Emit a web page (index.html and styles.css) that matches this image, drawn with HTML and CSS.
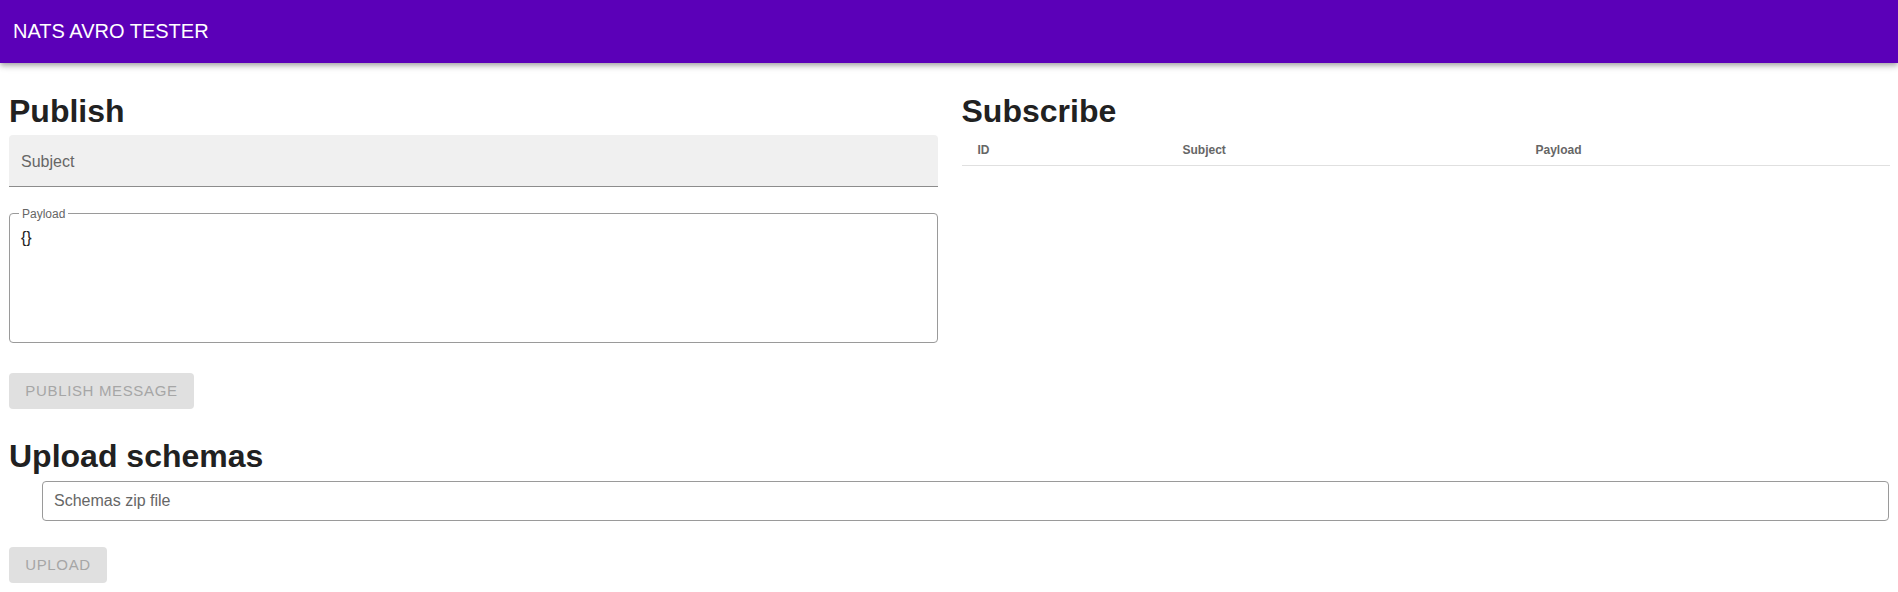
FILE: index.html
```html
<!DOCTYPE html>
<html lang="en">
<head>
<meta charset="utf-8">
<title>NATS AVRO TESTER</title>
<link rel="stylesheet" href="styles.css">
</head>
<body>
<header class="app-bar">
  <div class="app-title">NATS AVRO TESTER</div>
</header>
<main class="main">
  <div class="columns">
    <section class="col">
      <h1 class="heading">Publish</h1>
      <div class="filled-field">
        <input class="filled-input" type="text" placeholder="Subject">
      </div>
      <fieldset class="outlined-area">
        <legend class="area-legend">Payload</legend>
        <textarea class="area-input">{}</textarea>
      </fieldset>
      <button class="btn btn-publish" type="button" disabled>Publish message</button>
    </section>
    <section class="col">
      <h1 class="heading">Subscribe</h1>
      <table class="msg-table">
        <colgroup>
          <col class="c-id">
          <col class="c-subject">
          <col>
        </colgroup>
        <thead>
          <tr>
            <th>ID</th>
            <th>Subject</th>
            <th>Payload</th>
          </tr>
        </thead>
        <tbody></tbody>
      </table>
    </section>
  </div>
  <section class="upload">
    <h1 class="heading heading-upload">Upload schemas</h1>
    <div class="file-field">
      <input class="file-input" type="text" placeholder="Schemas zip file" readonly>
    </div>
    <button class="btn btn-upload" type="button" disabled>Upload</button>
  </section>
</main>
</body>
</html>
```

FILE: styles.css
```css
* { box-sizing: border-box; }

html, body {
  margin: 0;
  padding: 0;
  background: #ffffff;
  font-family: "Liberation Sans", Arial, Helvetica, sans-serif;
  color: #212121;
}

.app-bar {
  height: 63px;
  background: #5b00b8;
  display: flex;
  align-items: center;
  padding-left: 13px;
  box-shadow: 0 2px 4px -1px rgba(0,0,0,0.2), 0 4px 5px 0 rgba(0,0,0,0.14), 0 1px 10px 0 rgba(0,0,0,0.12);
  position: relative;
  z-index: 1;
}

.app-title {
  color: #ffffff;
  font-size: 20px;
  line-height: 24px;
  margin-top: -1px;
}

.main {
  padding: 8px 8px 0 9px;
}

.columns {
  display: grid;
  grid-template-columns: 1fr 1fr;
  column-gap: 24px;
}

.col {
  display: flex;
  flex-direction: column;
  align-items: stretch;
  min-width: 0;
}

.heading {
  font-size: 32px;
  font-weight: bold;
  line-height: 37px;
  margin: 21.5px 0 5px;
  color: #212121;
}

.filled-field {
  background: #f0f0f0;
  border-radius: 4px 4px 0 0;
  border-bottom: 1px solid #8c8c8c;
  height: 52px;
  display: flex;
  align-items: center;
}

.filled-input {
  width: 100%;
  border: none;
  outline: none;
  background: transparent;
  font-family: inherit;
  font-size: 16px;
  color: #212121;
  padding: 3px 12px 0;
}

.filled-input::placeholder,
.file-input::placeholder {
  color: #666666;
  opacity: 1;
}

.outlined-area {
  margin: 21px 0 0;
  padding: 8px 8px 0;
  border: 1px solid #9a9a9a;
  border-radius: 4px;
  min-inline-size: 0;
}

.area-legend {
  font-size: 12px;
  line-height: 12px;
  color: #666666;
  padding: 0 3px;
  margin-left: 1px;
}

.area-input {
  display: block;
  width: 100%;
  height: 114px;
  border: none;
  outline: none;
  resize: none;
  padding: 0 3px;
  margin: 0;
  font-family: inherit;
  font-size: 16px;
  line-height: 19px;
  color: #212121;
  background: transparent;
}

.btn {
  height: 36px;
  border: none;
  border-radius: 4px;
  background: #e0e0e0;
  color: #a6a6a6;
  font-family: inherit;
  font-size: 15px;
  letter-spacing: 0.65px;
  text-transform: uppercase;
  white-space: nowrap;
  padding: 0;
  text-align: center;
  align-self: flex-start;
}

.btn-publish {
  margin-top: 30px;
  width: 185px;
}

.msg-table {
  width: 100%;
  border-collapse: collapse;
  table-layout: fixed;
}

.c-id { width: 205px; }
.c-subject { width: 353px; }

.msg-table th {
  text-align: left;
  font-size: 12px;
  font-weight: bold;
  line-height: 14px;
  color: #666666;
  padding: 8px 16px;
  border-bottom: 1px solid #e0e0e0;
}

.upload {
  display: flex;
  flex-direction: column;
}

.heading-upload {
  margin: 29px 0 6px;
}

.file-field {
  margin-left: 33px;
  margin-right: 1px;
  height: 40px;
  border: 1px solid #9a9a9a;
  border-radius: 4px;
  display: flex;
  align-items: center;
}

.file-input {
  width: 100%;
  border: none;
  outline: none;
  background: transparent;
  font-family: inherit;
  font-size: 16px;
  color: #212121;
  padding: 0 11px;
}

.btn-upload {
  margin-top: 26px;
  width: 98px;
}
```
